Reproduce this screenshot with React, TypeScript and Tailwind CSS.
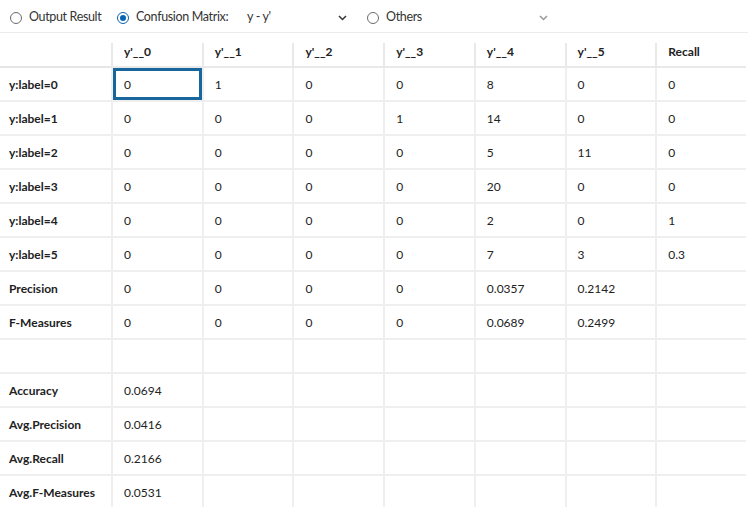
import React from 'react';

const cols = ["y'__0", "y'__1", "y'__2", "y'__3", "y'__4", "y'__5", 'Recall'];

const rows: [string, string[]][] = [
    ['y:label=0', ['0', '1', '0', '0', '8', '0', '0']],
    ['y:label=1', ['0', '0', '0', '1', '14', '0', '0']],
    ['y:label=2', ['0', '0', '0', '0', '5', '11', '0']],
    ['y:label=3', ['0', '0', '0', '0', '20', '0', '0']],
    ['y:label=4', ['0', '0', '0', '0', '2', '0', '1']],
    ['y:label=5', ['0', '0', '0', '0', '7', '3', '0.3']],
    ['Precision', ['0', '0', '0', '0', '0.0357', '0.2142', '']],
    ['F-Measures', ['0', '0', '0', '0', '0.0689', '0.2499', '']],
    ['', ['', '', '', '', '', '', '']],
    ['Accuracy', ['0.0694', '', '', '', '', '', '']],
    ['Avg.Precision', ['0.0416', '', '', '', '', '', '']],
    ['Avg.Recall', ['0.2166', '', '', '', '', '', '']],
    ['Avg.F-Measures', ['0.0531', '', '', '', '', '', '']],
];

const Radio = ({ checked, label }: { checked?: boolean; label: string }) => (
    <label className="flex items-center gap-[7px]">
        {checked ? (
            <span className="w-[12px] h-[12px] rounded-full border border-[#0a64b4] flex items-center justify-center">
                <span className="w-[6px] h-[6px] rounded-full bg-[#0a64b4]" />
            </span>
        ) : (
            <span className="w-[12px] h-[12px] rounded-full border border-[#6b6b6b]" />
        )}
        <span>{label}</span>
    </label>
);

const Chevron = ({ light }: { light?: boolean }) => (
    <svg width="9" height="6" viewBox="0 0 9 6" className={light ? 'text-[#999]' : 'text-[#333]'}>
        <path d="M1 1l3.5 3.5L8 1" fill="none" stroke="currentColor" strokeWidth="1.5" />
    </svg>
);

export default function App() {
    return (
        <div
            className="w-[748px] h-[507px] overflow-hidden bg-white text-[#222] text-[12px]"
            style={{ fontFamily: 'Lato, "Noto Sans", sans-serif' }}
        >
            <div className="h-[33px] flex items-center pl-[10px] pt-[3px] border-b border-[#ececec] text-[12.5px] tracking-[-0.35px] text-[#333]">
                <div className="w-[107px]">
                    <Radio label="Output Result" />
                </div>
                <div className="w-[130px]">
                    <Radio checked label="Confusion Matrix:" />
                </div>
                <div className="w-[100px] flex items-center justify-between">
                    <span>y - y'</span>
                    <Chevron />
                </div>
                <div className="ml-[20px] w-[172px]">
                    <Radio label="Others" />
                </div>
                <Chevron light />
            </div>

            <div className="mt-[10px] w-[746px] grid grid-cols-[111px_repeat(7,1fr)]">
                <div className="h-[25px] border-b-2 border-[#e6e6e6]" />
                {cols.map((c) => (
                    <div key={c} className="h-[25px] border-l-2 border-b-2 border-[#e9e9e9] pl-[11px] font-bold">
                        {c}
                    </div>
                ))}
                {rows.map(([label, vals], r) => (
                    <React.Fragment key={r}>
                        <div className="h-[34px] border-b-2 border-[#efefef] pl-[9px] pt-[1px] flex items-center font-bold">
                            {label}
                        </div>
                        {vals.map((v, c) => (
                            <div
                                key={c}
                                className={
                                    r === 0 && c === 0
                                        ? 'h-[34px] border-l-2 border-b-2 border-[#efefef] pl-[11px] pt-[1px] flex items-center ring-[3px] ring-inset ring-[#17679c]'
                                        : 'h-[34px] border-l-2 border-b-2 border-[#efefef] pl-[11px] pt-[1px] flex items-center'
                                }
                            >
                                {v}
                            </div>
                        ))}
                    </React.Fragment>
                ))}
            </div>
        </div>
    );
}
